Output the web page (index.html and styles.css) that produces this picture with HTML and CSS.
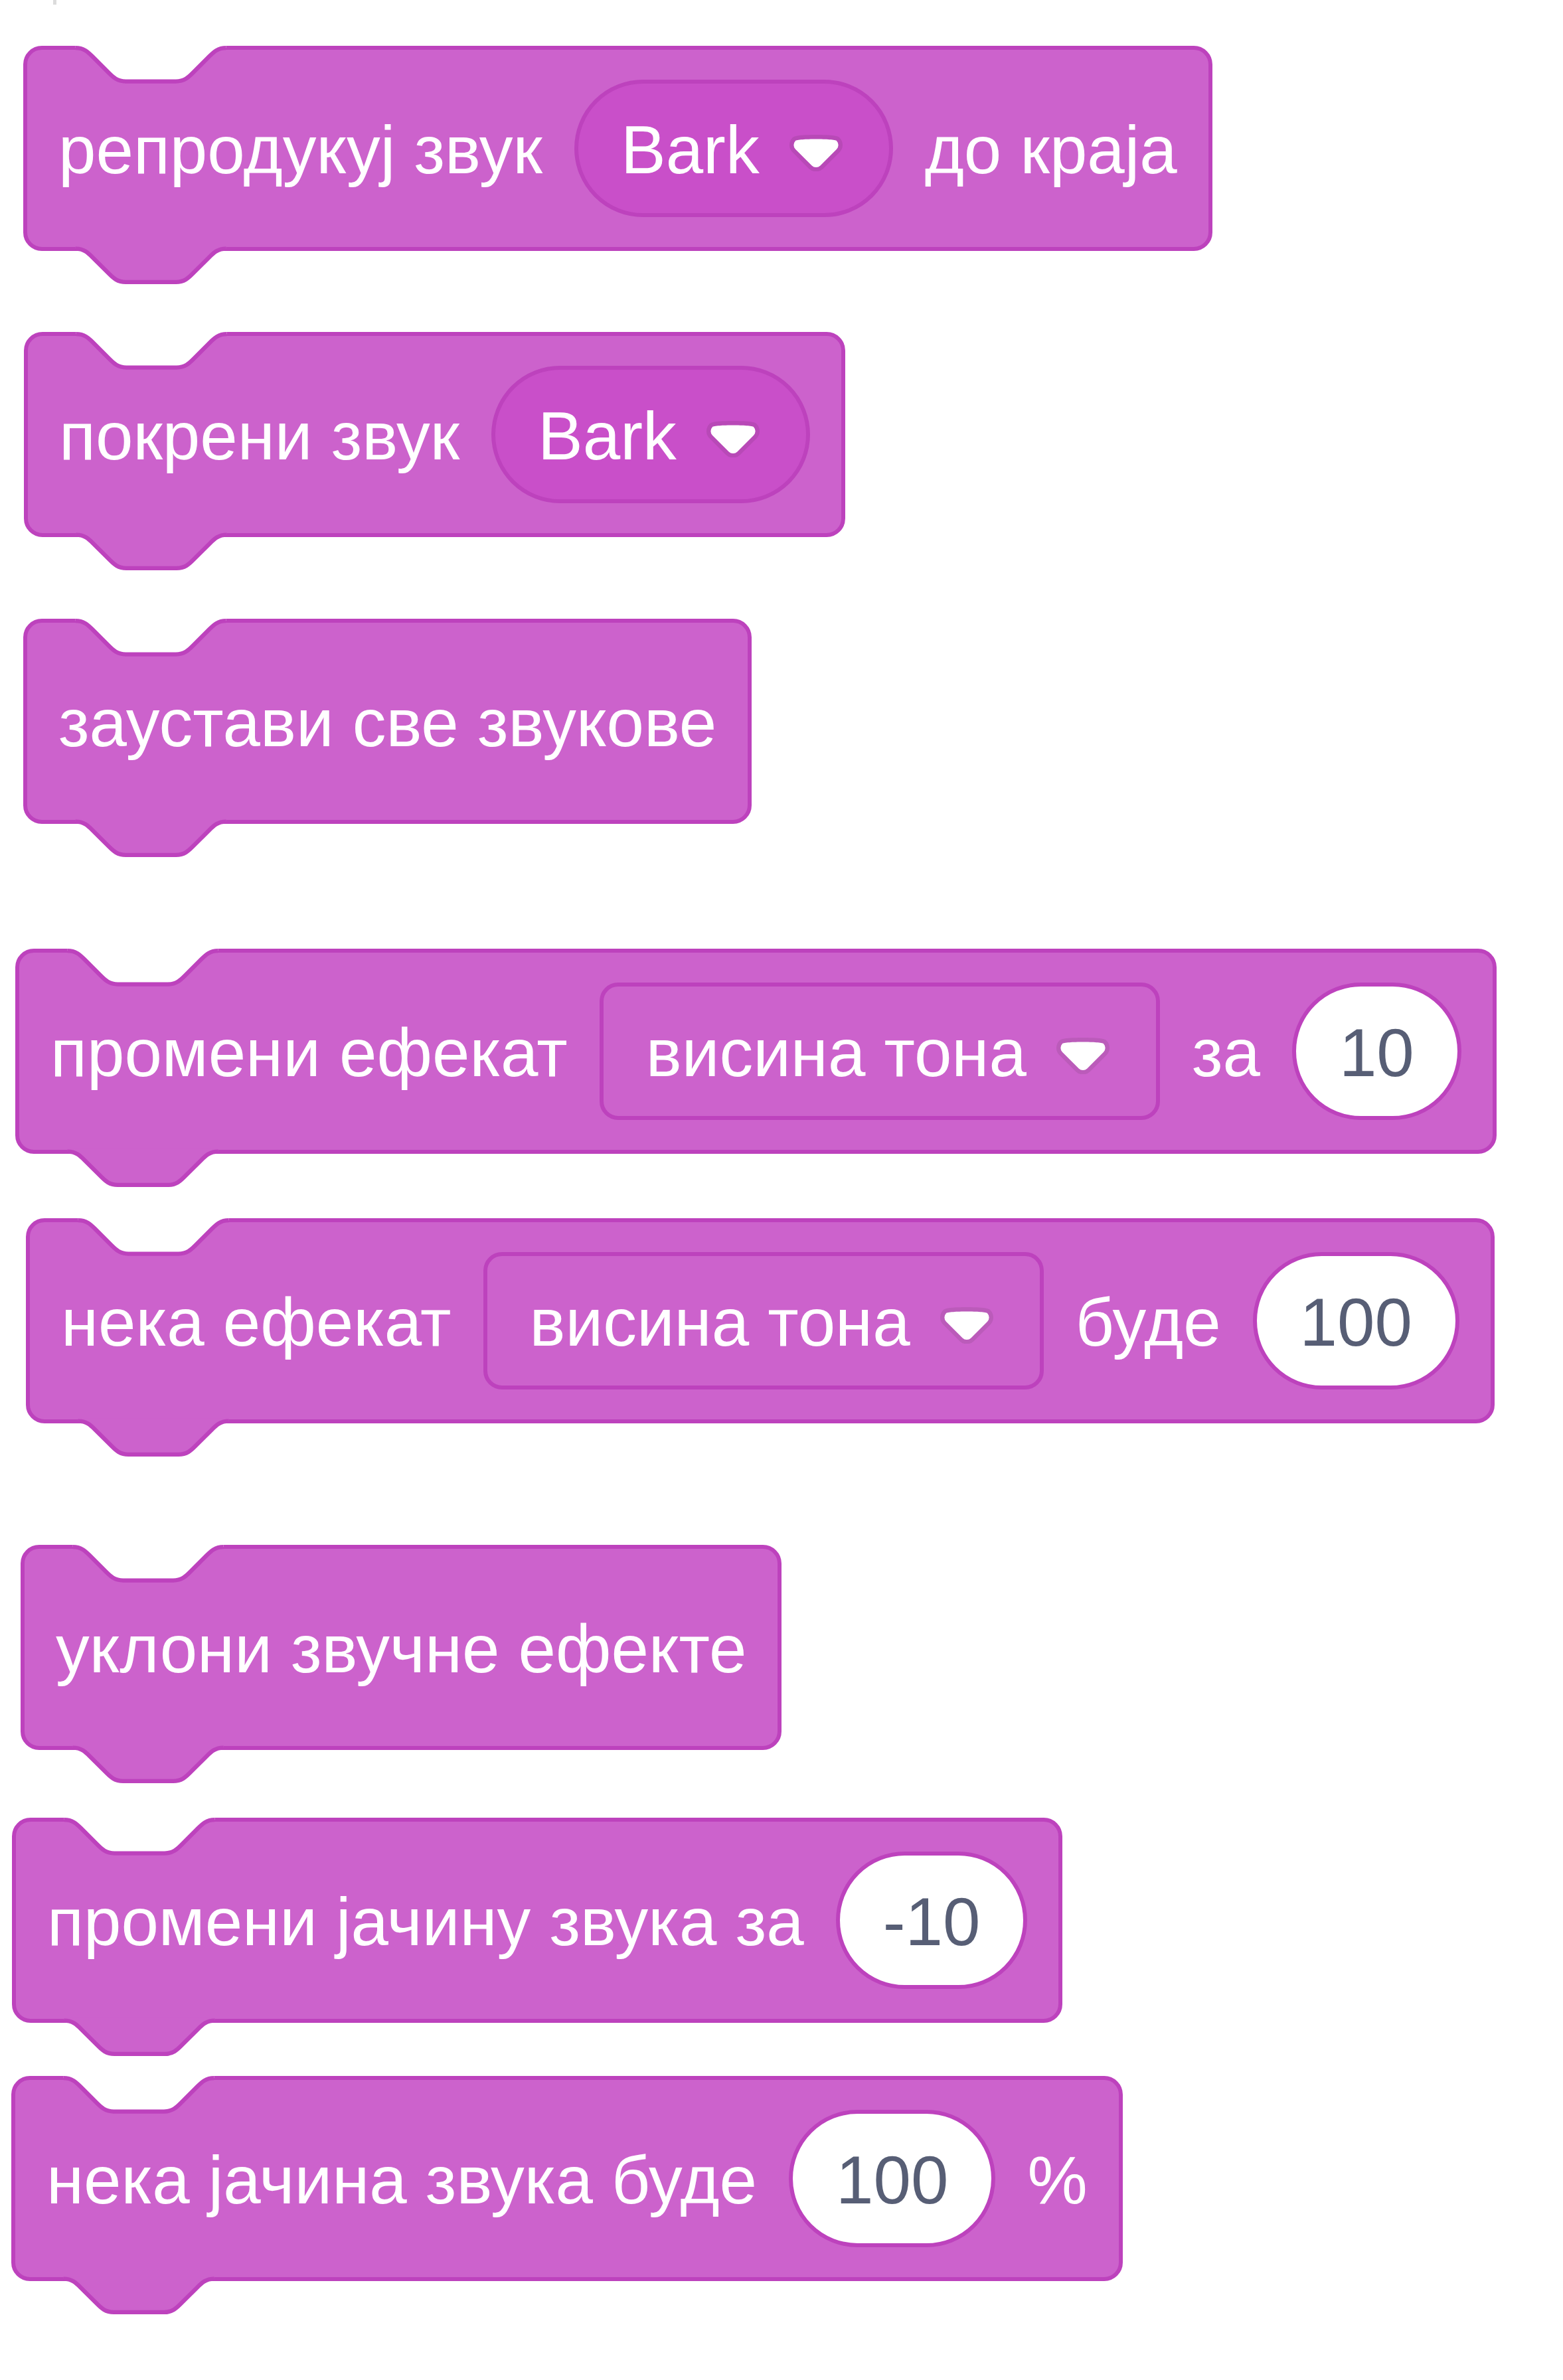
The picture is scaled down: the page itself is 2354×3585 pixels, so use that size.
FILE: index.html
```html
<!DOCTYPE html>
<html lang="sr">
<head>
<meta charset="utf-8">
<title>Звук блокови</title>
<link rel="stylesheet" href="styles.css">
</head>
<body>
<svg class="defs" aria-hidden="true">
  <defs>
    <symbol id="shape" viewBox="-0.5 -0.5 50 57.5">
      <path class="notch-fill" d="M 12,-0.7 L 12,0 C 14,0 15,1 16,2 L 20,6 C 21,7 22,8 24,8 L 36,8 C 38,8 39,7 40,6 L 44,2 C 45,1 46,0 48,0 L 48,-0.7 Z"/>
      <path class="edge" d="M 12,0 C 14,0 15,1 16,2 L 20,6 C 21,7 22,8 24,8 L 36,8 C 38,8 39,7 40,6 L 44,2 C 45,1 46,0 48,0"/>
      <path class="tab-fill" d="M 48,47.3 L 48,48 C 46,48 45,49 44,50 L 40,54 C 39,55 38,56 36,56 L 24,56 C 22,56 21,55 20,54 L 16,50 C 15,49 14,48 12,48 L 12,47.3 Z"/>
      <path class="edge" d="M 48,48 C 46,48 45,49 44,50 L 40,54 C 39,55 38,56 36,56 L 24,56 C 22,56 21,55 20,54 L 16,50 C 15,49 14,48 12,48"/>
    </symbol>
    <symbol id="arrow" viewBox="0 0 12.71 8.79">
      <path opacity="0.1" fill="#231f20" d="M12.71,2.44A2.41,2.41,0,0,1,12,4.16L8.08,8.08a2.45,2.45,0,0,1-3.45,0L0.72,4.16A2.42,2.42,0,0,1,0,2.44,2.48,2.48,0,0,1,.71.71C1,0.47,1.43,0,6.36,0S11.75,0.46,12,.71A2.44,2.44,0,0,1,12.71,2.44Z"/>
      <path fill="#fff" d="M6.36,7.790a1.43,1.43,0,0,1-1-.42L1.42,3.45a1.44,1.44,0,0,1,0-2c0.56-.56,9.31-0.56,9.87,0a1.44,1.44,0,0,1,0,2L7.37,7.37A1.43,1.43,0,0,1,6.36,7.79Z"/>
    </symbol>
  </defs>
</svg>

<main class="canvas">
  <div class="tick"></div>

  <div class="block b1">
    <svg class="shape" aria-hidden="true"><use href="#shape"/></svg>
    <span class="label">репродукуј звук</span>
    <span class="menu menu-round"><span class="menu-text">Bark</span><svg class="arrow" aria-hidden="true"><use href="#arrow"/></svg></span>
    <span class="label">до краја</span>
  </div>

  <div class="block b2">
    <svg class="shape" aria-hidden="true"><use href="#shape"/></svg>
    <span class="label">покрени звук</span>
    <span class="menu menu-round"><span class="menu-text">Bark</span><svg class="arrow" aria-hidden="true"><use href="#arrow"/></svg></span>
  </div>

  <div class="block b3">
    <svg class="shape" aria-hidden="true"><use href="#shape"/></svg>
    <span class="label">заустави све звукове</span>
  </div>

  <div class="block b4">
    <svg class="shape" aria-hidden="true"><use href="#shape"/></svg>
    <span class="label">промени ефекат</span>
    <span class="menu menu-square"><span class="menu-text">висина тона</span><svg class="arrow" aria-hidden="true"><use href="#arrow"/></svg></span>
    <span class="label">за</span>
    <span class="num"><span class="num-text">10</span></span>
  </div>

  <div class="block b5">
    <svg class="shape" aria-hidden="true"><use href="#shape"/></svg>
    <span class="label">нека ефекат</span>
    <span class="menu menu-square"><span class="menu-text">висина тона</span><svg class="arrow" aria-hidden="true"><use href="#arrow"/></svg></span>
    <span class="label">буде</span>
    <span class="num"><span class="num-text">100</span></span>
  </div>

  <div class="block b6">
    <svg class="shape" aria-hidden="true"><use href="#shape"/></svg>
    <span class="label">уклони звучне ефекте</span>
  </div>

  <div class="block b7">
    <svg class="shape" aria-hidden="true"><use href="#shape"/></svg>
    <span class="label">промени јачину звука за</span>
    <span class="num"><span class="num-text">-10</span></span>
  </div>

  <div class="block b8">
    <svg class="shape" aria-hidden="true"><use href="#shape"/></svg>
    <span class="label">нека јачина звука буде</span>
    <span class="num"><span class="num-text">100</span></span>
    <span class="label">%</span>
  </div>
</main>
</body>
</html>
```

FILE: styles.css
```css
* {
  box-sizing: border-box;
}

html,
body {
  margin: 0;
  background: #ffffff;
}

body {
  font-family: "Liberation Sans", Arial, Helvetica, sans-serif;
}

.defs {
  position: absolute;
  width: 0;
  height: 0;
  overflow: hidden;
}

.notch-fill {
  fill: #ffffff;
}

.tab-fill {
  fill: #cc62cc;
}

.edge {
  fill: none;
  stroke: #bd42bd;
  stroke-width: 1;
}

.canvas {
  display: flex;
  flex-direction: column;
  align-items: flex-start;
  padding-bottom: 120px;
}

.tick {
  width: 5px;
  height: 7px;
  margin-left: 80px;
  background: #dcdcdc;
}

.block {
  position: relative;
  display: flex;
  align-items: center;
  gap: 48px;
  height: 309px;
  padding: 0 47px;
  border: 6px solid #bd42bd;
  border-radius: 28px;
  background: #cc62cc;
  color: #ffffff;
  font-size: 101.5px;
  white-space: nowrap;
}

.shape {
  position: absolute;
  left: -6px;
  top: -6px;
  width: 315px;
  height: 362.25px;
  overflow: visible;
}

.label,
.menu-text,
.num-text {
  padding-top: 6px;
}

.menu {
  display: flex;
  align-items: center;
  height: 207px;
  padding: 0 70px 0 64px;
  border: 6px solid #bd42bd;
}

.menu-round {
  border-radius: 104px;
  background: #c94fc9;
}

.menu-square {
  border-radius: 28px;
  background: #cc62cc;
}

.menu-text {
  margin-right: 45px;
}

.arrow {
  width: 80px;
  height: 55.4px;
  margin-top: 14px;
  flex: none;
}

.num {
  display: flex;
  align-items: center;
  justify-content: center;
  height: 207px;
  padding: 0 65px;
  border: 6px solid #bd42bd;
  border-radius: 104px;
  background: #ffffff;
  color: #575e75;
}

.b1 { margin: 62px 0 0 35px; }
.b2 { margin: 122px 0 0 36px; }
.b3 { margin: 123px 0 0 35px; }
.b4 { margin: 188px 0 0 23px; }
.b5 { margin: 97px 0 0 39px; }
.b6 { margin: 183px 0 0 31px; }
.b7 { margin: 102px 0 0 18px; }
.b8 { margin: 80px 0 0 17px; }
```
